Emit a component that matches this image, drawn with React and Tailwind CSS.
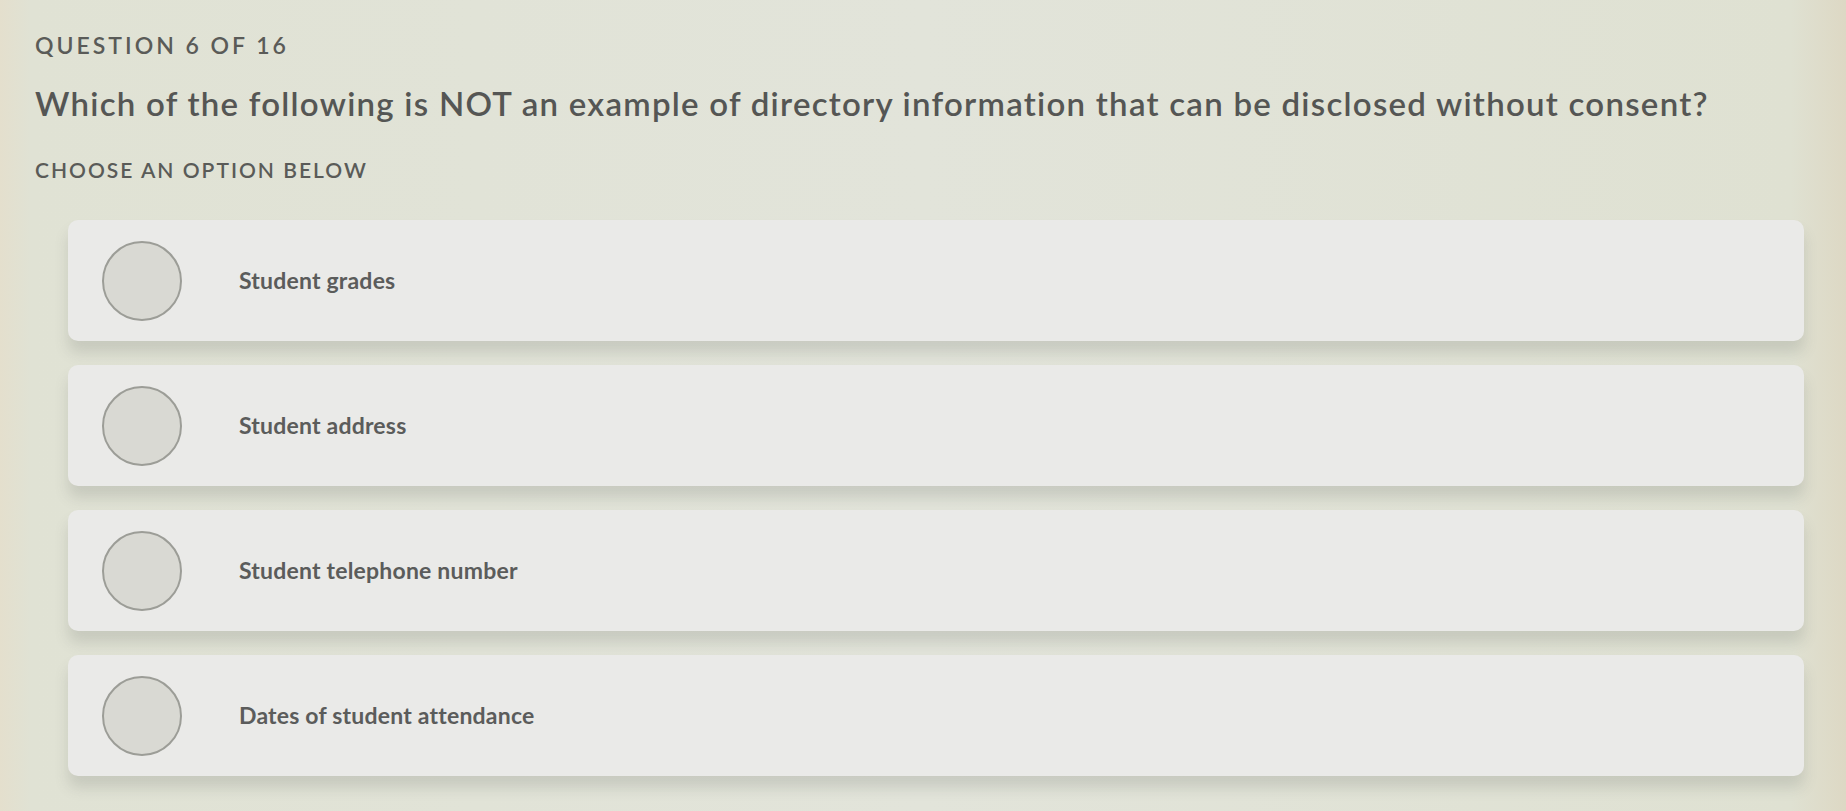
const options = [
  "Student grades",
  "Student address",
  "Student telephone number",
  "Dates of student attendance",
];

function OptionCard({ label }) {
  return (
    <div className="flex h-[121px] items-center rounded-[10px] bg-[#eaeae8] shadow-[0_12px_14px_rgba(90,95,90,0.18)]">
      <div className="ml-[34px] h-[80px] w-[80px] shrink-0 rounded-full border-2 border-[#9c9d97] bg-[#d9d9d3]" />
      <span className="ml-[57px] text-[23px] font-bold tracking-[0.2px] text-[#5b5c5b]">{label}</span>
    </div>
  );
}

export default function App() {
  return (
    <div
      className="min-h-[811px] w-full bg-[linear-gradient(90deg,#e4dfcd_0px,#e0e2d4_30px,#e2e4da_50%,#dfe1d2_97%,#ddd8c4_100%)] px-[35px] pt-[34px] text-[#5a5b58]"
      style={{ fontFamily: "Lato, 'Noto Sans', sans-serif" }}
    >
      <div className="text-[23px] font-semibold leading-none tracking-[3px]">
        QUESTION 6 OF 16
      </div>
      <h1 className="mt-[30px] text-[33px] font-semibold leading-none tracking-[1.25px] text-[#555654]">
        Which of the following is NOT an example of directory information that can be disclosed without consent?
      </h1>
      <div className="mt-[39px] text-[21px] font-semibold leading-none tracking-[2px]">
        CHOOSE AN OPTION BELOW
      </div>
      <div className="ml-[33px] mr-[7px] mt-[40px] flex flex-col gap-[24px]">
        {options.map((o) => (
          <OptionCard key={o} label={o} />
        ))}
      </div>
    </div>
  );
}
